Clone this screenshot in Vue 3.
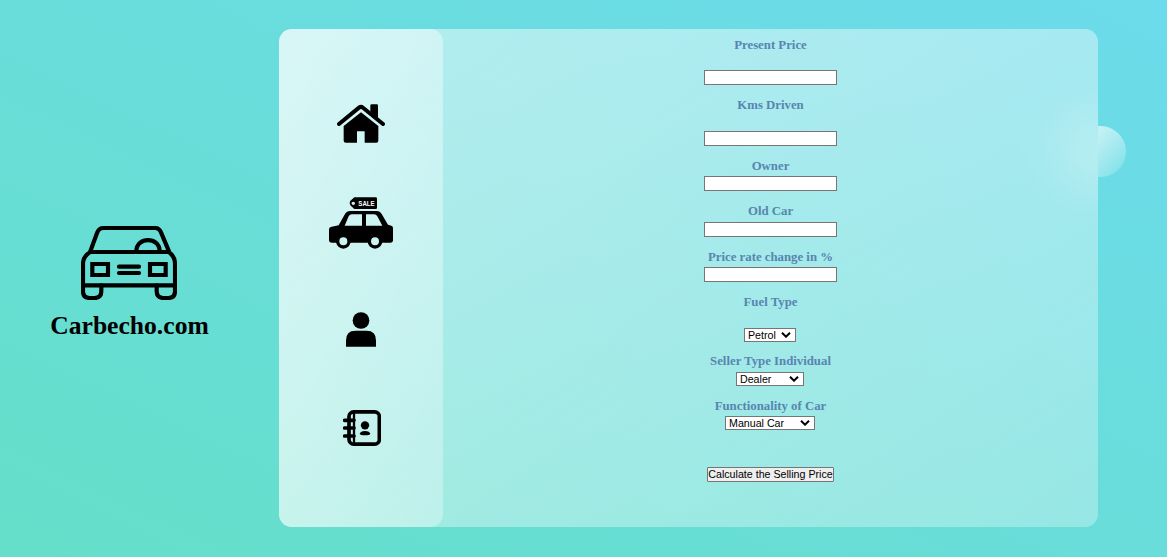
<script setup>
import { reactive } from 'vue'

const fields = reactive([
  { id: 'price', label: 'Present Price', gap: 'wide', value: '' },
  { id: 'kms', label: 'Kms Driven', gap: 'widest', value: '' },
  { id: 'owner', label: 'Owner', gap: 'tight', value: '' },
  { id: 'old', label: 'Old Car', gap: 'snug', value: '' },
  { id: 'rate', label: 'Price rate change in %', gap: 'tight', value: '' },
])

const choices = [
  { id: 'fuel', label: 'Fuel Type', gap: 'widest', size: 'small', options: ['Petrol', 'Diesel', 'CNG'] },
  { id: 'seller', label: 'Seller Type Individual', gap: 'snug', size: 'medium', options: ['Dealer', 'Individual'] },
  { id: 'gear', label: 'Functionality of Car', gap: 'tight', size: 'large', options: ['Manual Car', 'Automatic Car'] },
]
</script>

<template>
  <main class="page">
    <div class="circle"></div>
    <section class="brand">
      <svg class="logo" viewBox="123 30 288 225" fill="none" stroke="#000" stroke-width="12.5" stroke-linejoin="round" stroke-linecap="round">
        <path d="M151 109 L172 52 Q177 39 190 39 H346 Q358 39 363 52 L387 109" />
        <path d="M151 111 H386 Q405 124 405 146 V211 H129 V146 Q129 124 151 111 Z" />
        <path d="M289 109 C289 64 359 64 359 109" />
        <path d="M129 211 V229 Q129 249 149 249 H164 Q184 249 184 229 V211 M350 211 V229 Q350 249 370 249 H385 Q405 249 405 229 V211" />
        <path d="M157 147 H204 V180 H157 Z M330 147 H377 V180 H330 Z" stroke-linejoin="miter" />
        <path d="M237 155 H297 M237 174 H297" />
      </svg>
      <h1>Carbecho.com</h1>
    </section>

    <section class="glass">
      <nav class="side">
        <svg class="home" viewBox="51 43 144 117">
          <path d="M71 109 L123 68 L175 109 V153 Q175 159 169 159 H134 V125 H111 V159 H78 Q71 159 71 153 Z" />
          <path d="M151 66 V48 Q151 44 155 44 H170 Q174 44 174 48 V86 Z" />
          <path d="M57 103 L117 54 Q123 49 129 54 L189 103" fill="none" stroke="#000" stroke-width="12" stroke-linecap="round" />
        </svg>
        <svg class="sale" viewBox="27 36 192 156">
          <path d="M103 37 H167 Q171 37 171 41 V68 Q171 72 167 72 H103 L93 63 Q89 59 89 54 Q89 50 93 46 Z" />
          <circle cx="100" cy="55" r="5" fill="#d0f5f3" />
          <text x="115" y="63" textLength="49" lengthAdjust="spacingAndGlyphs">SALE</text>
          <path fill-rule="evenodd" d="M91 78 H170 Q180 78 185 87 L204 119 L214 122 Q219 123 219 130 V166 Q219 173 211 173 H36 Q27 173 27 165 V133 Q27 126 35 125 L56 121 L75 87 Q80 78 91 78 Z M96 88 Q89 88 86 94 L74 122 H126 V88 Z M138 88 V122 H187 L172 94 Q169 88 162 88 Z" />
          <g fill="#cbf4f1" stroke="#000" stroke-width="10">
            <circle cx="70" cy="169" r="17" />
            <circle cx="165" cy="169" r="17" />
          </g>
        </svg>
        <svg class="person" viewBox="48 37 90 104">
          <circle cx="93" cy="62" r="25" />
          <path d="M48 141 V122 Q48 93 76 93 H110 Q138 93 138 122 V141 Z" />
        </svg>
        <svg class="book" viewBox="39 29 114 108" fill="none" stroke="#000">
          <rect x="57" y="34.5" width="91" height="97" rx="14" stroke-width="11" />
          <path d="M72 34 V132" stroke-width="7" />
          <path d="M44 60 H72 M44 83 H72 M44 107 H72" stroke-width="11" stroke-linecap="round" />
          <circle cx="105" cy="75" r="12.5" fill="#000" stroke="none" />
          <path d="M89 101 Q91 92 105 92 Q119 92 121 101 Q119 105 105 105 Q91 105 89 101 Z" fill="#000" stroke="none" />
        </svg>
      </nav>

      <form class="form" @submit.prevent>
        <div v-for="f in fields" :key="f.id" class="field" :class="f.gap">
          <label :for="f.id">{{ f.label }}</label>
          <input :id="f.id" v-model="f.value" type="text" />
        </div>
        <div v-for="c in choices" :key="c.id" class="field" :class="[c.gap, c.id]">
          <label :for="c.id">{{ c.label }}</label>
          <div class="select" :class="c.size">
            <select :id="c.id">
              <option v-for="o in c.options" :key="o">{{ o }}</option>
            </select>
            <svg viewBox="0 0 10 6" fill="none" stroke="#000" stroke-width="2"><path d="M1 .8 L5 4.7 L9 .8" /></svg>
          </div>
        </div>
        <button type="submit">Calculate the Selling Price</button>
      </form>
    </section>
  </main>
</template>

<style>
body {
  margin: 0;
  overflow: hidden;
}
</style>

<style scoped>
.page {
  position: relative;
  box-sizing: border-box;
  display: grid;
  grid-template-columns: 259px 819px;
  column-gap: 20px;
  height: 557px;
  padding: 29px 0 30px;
  background: linear-gradient(to right top, #65dfc9, #6cdbeb);
  font-family: "Liberation Serif", "Times New Roman", serif;
}
.circle {
  position: absolute;
  left: 1075px;
  top: 126px;
  width: 51px;
  height: 51px;
  border-radius: 50%;
  clip-path: inset(0 0 0 23px);
  background: linear-gradient(to right bottom, rgba(255, 255, 255, 0.8), rgba(255, 255, 255, 0.1));
}
.brand {
  display: flex;
  flex-direction: column;
  align-items: center;
  padding-top: 196px;
}
.logo {
  width: 96px;
  height: 75px;
  margin-right: 2px;
}
h1 {
  margin: 11px 0 0;
  font-size: 25.6px;
  line-height: 30px;
  font-weight: bold;
  color: #000;
}
.glass {
  position: relative;
  z-index: 1;
  display: flex;
  border-radius: 12.8px;
  background:
    radial-gradient(circle 80px at 100% 122px, rgba(255, 255, 255, 0.2), rgba(255, 255, 255, 0.165) 25%, rgba(255, 255, 255, 0.085) 50%, rgba(255, 255, 255, 0.025) 75%, rgba(255, 255, 255, 0)),
    linear-gradient(to right bottom, rgba(255, 255, 255, 0.5), rgba(255, 255, 255, 0.3));
}
.side {
  box-sizing: border-box;
  display: flex;
  flex-direction: column;
  align-items: center;
  width: 164px;
  padding-top: 75px;
  border-radius: 12.8px;
  background: linear-gradient(to right bottom, rgba(255, 255, 255, 0.5), rgba(255, 255, 255, 0.3));
}
.home {
  width: 48px;
  height: 39px;
}
.sale {
  width: 64px;
  height: 52px;
  margin-top: 54px;
}
.sale text {
  font: bold 23px "Liberation Sans", Arial, sans-serif;
  fill: #fff;
}
.person {
  width: 30px;
  height: 35px;
  margin-top: 63px;
}
.book {
  width: 38px;
  height: 36px;
  margin-top: 63px;
  margin-left: 2px;
}
.form {
  flex: 1;
  display: flex;
  flex-direction: column;
  align-items: center;
  padding-top: 9px;
}
.field {
  display: flex;
  flex-direction: column;
  align-items: center;
  margin-bottom: 13px;
}
.field.fuel { margin-bottom: 12px; }
.field.gear { margin-bottom: 37px; }
.wide { gap: 17px; }
.widest { gap: 18px; }
.snug { gap: 3px; }
.tight { gap: 2px; }
label {
  font-size: 12.8px;
  line-height: 15px;
  font-weight: bold;
  color: #5885af;
}
input {
  box-sizing: border-box;
  width: 133px;
  height: 15px;
  margin: 0;
  padding: 1px;
  border: 1px solid #767676;
  border-radius: 0;
  background: #fff;
  font: 10.67px "Liberation Sans", Arial, sans-serif;
}
.select {
  display: grid;
  align-items: center;
  height: 14px;
  margin-right: 1px;
}
.select.small { width: 52px; }
.select.medium { width: 68px; }
.select.large { width: 90px; }
select {
  grid-area: 1 / 1;
  box-sizing: border-box;
  width: 100%;
  height: 14px;
  margin: 0;
  padding: 0 0 0 3px;
  border: 1px solid #767676;
  border-radius: 0;
  appearance: none;
  background: #fff;
  color: #000;
  font: 10.67px/12px "Liberation Sans", Arial, sans-serif;
}
.select svg {
  grid-area: 1 / 1;
  justify-self: end;
  width: 10px;
  height: 6px;
  margin-right: 5px;
  pointer-events: none;
}
button {
  box-sizing: border-box;
  width: 127px;
  height: 15px;
  margin: 0;
  padding: 0;
  border: 1px solid #767676;
  border-radius: 1px;
  background: #efefef;
  color: #000;
  font: 10.67px/13px "Liberation Sans", Arial, sans-serif;
  white-space: nowrap;
}
</style>
